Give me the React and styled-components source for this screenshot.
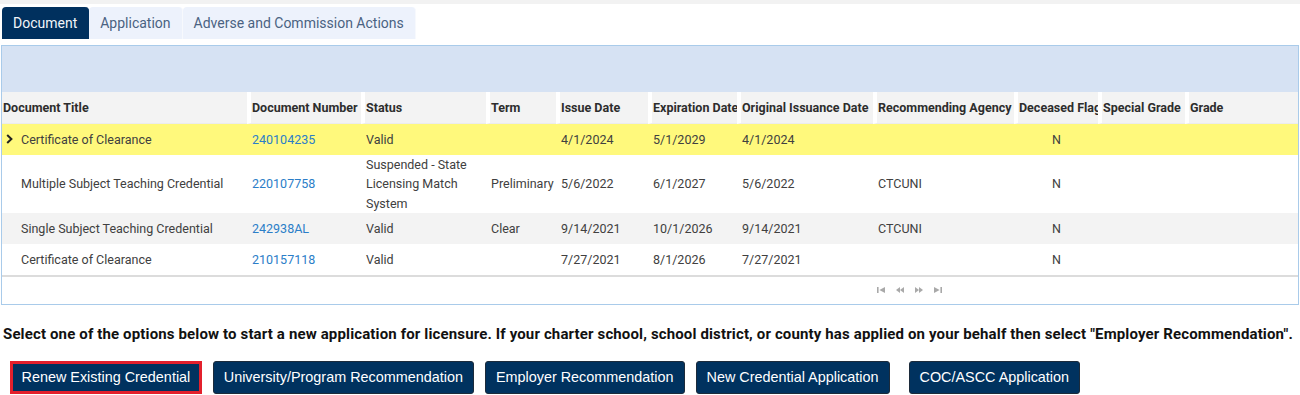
import React from 'react';
import styled, { createGlobalStyle } from 'styled-components';

const GlobalStyle = createGlobalStyle`
  body {
    margin: 0;
    background: #fff;
    font-family: Roboto, "Liberation Sans", sans-serif;
  }
`;

const Page = styled.div`
  width: 1300px;
  border-top: 4px solid #f2f2f2;
`;

const TabBar = styled.div`
  display: flex;
  margin: 3px 0 0 2px;
  height: 32px;
`;

const Tab = styled.div`
  display: flex;
  align-items: center;
  padding: 0 11px;
  font-size: 14px;
  border-radius: 4px 4px 0 0;
  background: ${(p) => (p.$active ? '#00305e' : '#edf2fc')};
  color: ${(p) => (p.$active ? '#f2f5f9' : '#4a6282')};
  border-right: 1px solid ${(p) => (p.$active ? '#00305e' : '#f7f9fd')};
`;

const Grid = styled.div`
  margin: 6px 0 0 1px;
  width: 1298px;
  box-sizing: border-box;
  border: 1px solid #a9cbea;
`;

const GroupBand = styled.div`
  height: 46px;
  background: #d6e2f3;
`;

const Table = styled.table`
  width: 100%;
  table-layout: fixed;
  border-collapse: separate;
  border-spacing: 0;
`;

const Th = styled.th`
  height: 31px;
  padding: 0 0 0 1px;
  background: #f3f3f3;
  border-left: ${(p) => (p.$first ? '0' : '4px solid #fff')};
  border-bottom: 1px solid #ececec;
  text-align: left;
  font-size: 12.5px;
  font-weight: 700;
  color: #2d2d2d;
  white-space: nowrap;
  overflow: hidden;
`;

const Tr = styled.tr`
  background: ${(p) => p.$bg};
`;

const Td = styled.td`
  height: 31px;
  padding: 0 4px 0 ${(p) => (p.$first ? 3 : 5)}px;
  font-size: 12.5px;
  line-height: 19.3px;
  color: #404040;
  text-align: ${(p) => (p.$center ? 'center' : 'left')};
  vertical-align: middle;
`;

const TitleCell = styled.div`
  display: flex;
  align-items: center;
`;

const Arrow = styled.span`
  display: flex;
  align-items: center;
  width: 16px;
  padding-left: 1px;
  box-sizing: border-box;
  flex: none;
`;

const DocLink = styled.a`
  color: #2b7ec8;
  text-decoration: none;
`;

const GridFooter = styled.div`
  height: 27px;
  border-top: 2px solid #dcdcdc;
  display: flex;
  align-items: center;
  gap: 11px;
  padding-left: 875px;
`;

const Message = styled.p`
  margin: 20px 0 0 3px;
  font-size: 15px;
  letter-spacing: 0.14px;
  font-weight: 700;
  color: #111;
  white-space: nowrap;
`;

const ButtonRow = styled.div`
  display: flex;
  align-items: center;
  gap: 11px;
  margin: 18px 0 0 10px;
`;

const Highlight = styled.div`
  border: 3px solid #e3202c;
  display: flex;
`;

const ActionButton = styled.button`
  height: ${(p) => (p.$inner ? 27 : 33)}px;
  padding: 0 ${(p) => (p.$inner ? 7.5 : 10)}px;
  margin-left: ${(p) => p.$offset || 0}px;
  background: #00325f;
  color: #fff;
  border: 1px solid ${(p) => (p.$inner ? '#00325f' : '#1c2b3b')};
  border-radius: ${(p) => (p.$inner ? 0 : 3)}px;
  font-family: "Liberation Sans", Arial, sans-serif;
  font-size: 14.4px;
  cursor: pointer;
`;

const columns = [
  { key: 'title', label: 'Document Title', width: 245 },
  { key: 'number', label: 'Document Number', width: 114 },
  { key: 'status', label: 'Status', width: 125 },
  { key: 'term', label: 'Term', width: 70 },
  { key: 'issue', label: 'Issue Date', width: 92 },
  { key: 'expiration', label: 'Expiration Date', width: 89 },
  { key: 'original', label: 'Original Issuance Date', width: 136 },
  { key: 'agency', label: 'Recommending Agency', width: 141 },
  { key: 'deceased', label: 'Deceased Flag', width: 84, center: true },
  { key: 'special', label: 'Special Grade', width: 87 },
  { key: 'grade', label: 'Grade', width: 113 },
];

const rows = [
  {
    title: 'Certificate of Clearance', number: '240104235', status: 'Valid', term: '',
    issue: '4/1/2024', expiration: '5/1/2029', original: '4/1/2024', agency: '', deceased: 'N',
    bg: '#fff97c', selected: true,
  },
  {
    title: 'Multiple Subject Teaching Credential', number: '220107758',
    status: 'Suspended - State Licensing Match System', term: 'Preliminary',
    issue: '5/6/2022', expiration: '6/1/2027', original: '5/6/2022', agency: 'CTCUNI', deceased: 'N',
    bg: '#fff',
  },
  {
    title: 'Single Subject Teaching Credential', number: '242938AL', status: 'Valid', term: 'Clear',
    issue: '9/14/2021', expiration: '10/1/2026', original: '9/14/2021', agency: 'CTCUNI', deceased: 'N',
    bg: '#f3f3f3',
  },
  {
    title: 'Certificate of Clearance', number: '210157118', status: 'Valid', term: '',
    issue: '7/27/2021', expiration: '8/1/2026', original: '7/27/2021', agency: '', deceased: 'N',
    bg: '#fff',
  },
];

const Chevron = () => (
  <svg width="7" height="10" viewBox="0 0 7 10">
    <path d="M1.2 1 L5.4 5 L1.2 9" fill="none" stroke="#222" strokeWidth="2" />
  </svg>
);

const PagerIcon = ({ kind }) => {
  const shapes = {
    first: ['M0 0h1.6v6H0z', 'M8 0v6L2.4 3z'],
    prev: ['M4 0v6L0 3z', 'M8 0v6L4 3z'],
    next: ['M0 0v6l4-3z', 'M4 0v6l4-3z'],
    last: ['M0 0v6l5.6-3z', 'M6.4 0H8v6H6.4z'],
  };
  return (
    <svg width="8" height="6" viewBox="0 0 8 6">
      {shapes[kind].map((d) => (
        <path key={d} d={d} fill="#a9a9a9" />
      ))}
    </svg>
  );
};

const buttons = [
  { label: 'University/Program Recommendation' },
  { label: 'Employer Recommendation' },
  { label: 'New Credential Application' },
  { label: 'COC/ASCC Application', offset: 8 },
];

export default function App() {
  return (
    <Page>
      <GlobalStyle />
      <TabBar>
        <Tab $active>Document</Tab>
        <Tab>Application</Tab>
        <Tab>Adverse and Commission Actions</Tab>
      </TabBar>

      <Grid>
        <GroupBand />
        <Table>
          <colgroup>
            {columns.map((c) => (
              <col key={c.key} style={{ width: c.width }} />
            ))}
          </colgroup>
          <thead>
            <tr>
              {columns.map((c, i) => (
                <Th key={c.key} $first={i === 0}>{c.label}</Th>
              ))}
            </tr>
          </thead>
          <tbody>
            {rows.map((r) => (
              <Tr key={r.number} $bg={r.bg}>
                {columns.map((c, i) => {
                  if (i === 0) {
                    return (
                      <Td key={c.key} $first>
                        <TitleCell>
                          <Arrow>{r.selected && <Chevron />}</Arrow>
                          {r.title}
                        </TitleCell>
                      </Td>
                    );
                  }
                  if (c.key === 'number') {
                    return (
                      <Td key={c.key}>
                        <DocLink href="#">{r.number}</DocLink>
                      </Td>
                    );
                  }
                  return (
                    <Td key={c.key} $center={c.center}>{r[c.key] || ''}</Td>
                  );
                })}
              </Tr>
            ))}
          </tbody>
        </Table>
        <GridFooter>
          <PagerIcon kind="first" />
          <PagerIcon kind="prev" />
          <PagerIcon kind="next" />
          <PagerIcon kind="last" />
        </GridFooter>
      </Grid>

      <Message>
        Select one of the options below to start a new application for licensure. If your charter school, school district, or county has applied on your behalf then select "Employer Recommendation".
      </Message>

      <ButtonRow>
        <Highlight>
          <ActionButton $inner>Renew Existing Credential</ActionButton>
        </Highlight>
        {buttons.map((b) => (
          <ActionButton key={b.label} $offset={b.offset}>{b.label}</ActionButton>
        ))}
      </ButtonRow>
    </Page>
  );
}
